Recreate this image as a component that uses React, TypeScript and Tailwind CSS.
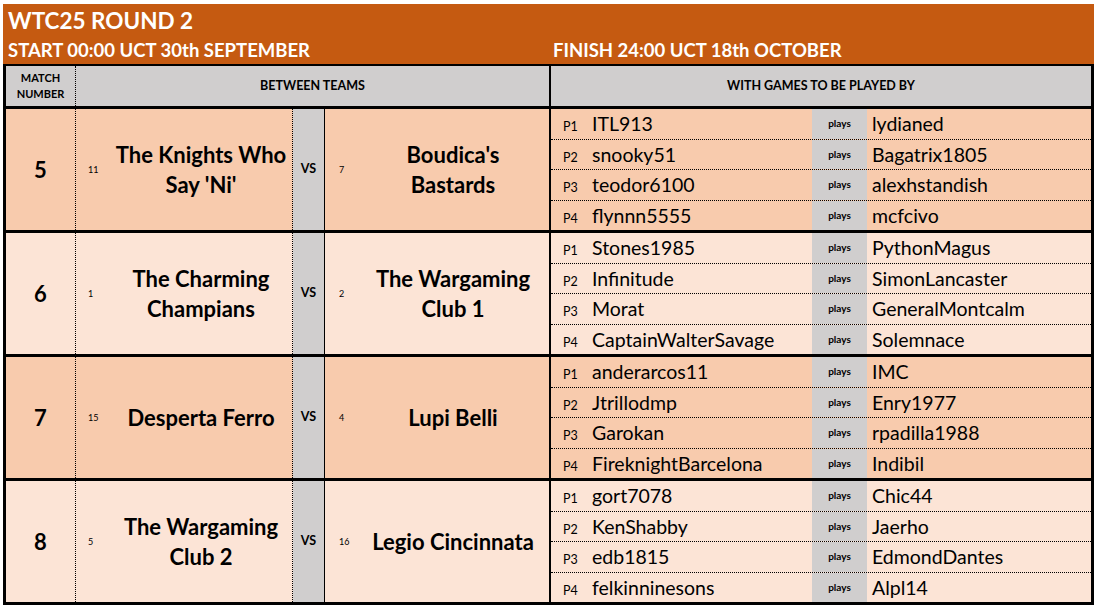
import React from 'react';

type Match = {
  no: number;
  seedA: number;
  teamA: string[];
  seedB: number;
  teamB: string[];
  games: [string, string][];
  dark: boolean;
};

const matches: Match[] = [
  {
    no: 5,
    seedA: 11,
    teamA: ['The Knights Who', "Say 'Ni'"],
    seedB: 7,
    teamB: ["Boudica's", 'Bastards'],
    games: [
      ['ITL913', 'lydianed'],
      ['snooky51', 'Bagatrix1805'],
      ['teodor6100', 'alexhstandish'],
      ['flynnn5555', 'mcfcivo'],
    ],
    dark: true,
  },
  {
    no: 6,
    seedA: 1,
    teamA: ['The Charming', 'Champians'],
    seedB: 2,
    teamB: ['The Wargaming', 'Club 1'],
    games: [
      ['Stones1985', 'PythonMagus'],
      ['Infinitude', 'SimonLancaster'],
      ['Morat', 'GeneralMontcalm'],
      ['CaptainWalterSavage', 'Solemnace'],
    ],
    dark: false,
  },
  {
    no: 7,
    seedA: 15,
    teamA: ['Desperta Ferro'],
    seedB: 4,
    teamB: ['Lupi Belli'],
    games: [
      ['anderarcos11', 'IMC'],
      ['Jtrillodmp', 'Enry1977'],
      ['Garokan', 'rpadilla1988'],
      ['FireknightBarcelona', 'Indibil'],
    ],
    dark: true,
  },
  {
    no: 8,
    seedA: 5,
    teamA: ['The Wargaming', 'Club 2'],
    seedB: 16,
    teamB: ['Legio Cincinnata'],
    games: [
      ['gort7078', 'Chic44'],
      ['KenShabby', 'Jaerho'],
      ['edb1815', 'EdmondDantes'],
      ['felkinninesons', 'Alpl14'],
    ],
    dark: false,
  },
];

const TeamCell: React.FC<{ seed: number; lines: string[]; seedCls: string }> = ({ seed, lines, seedCls }) => (
  <div className="flex-1 flex items-center">
    <span className={`text-[9px] ${seedCls}`}>{seed}</span>
    <div className="flex-1 text-center text-[22px] font-bold leading-[30px] whitespace-nowrap">
      {lines.map((l) => (
        <div key={l}>{l}</div>
      ))}
    </div>
  </div>
);

const App: React.FC = () => {
  return (
    <div className="w-[1098px] h-[609px] bg-white pt-[4px] pl-[3px] text-black" style={{ fontFamily: 'Lato, "Open Sans", sans-serif' }}>
      {/* Title banner */}
      <div className="w-[1091px] h-[60px] bg-[#c55a11] text-white font-bold pl-[5px]">
        <div className="text-[22.5px] leading-[34px]">WTC25 ROUND 2</div>
        <div className="flex text-[18.5px] leading-[24px]">
          <div className="w-[545px]">START 00:00 UCT 30th SEPTEMBER</div>
          <div>FINISH 24:00 UCT 18th OCTOBER</div>
        </div>
      </div>

      {/* Table */}
      <div className="w-[1091px] border-black border-t-2 border-l-[3px] border-r-[3px] border-b-[3px]">
        {/* Header */}
        <div className="flex h-[43px] bg-[#d0cece] border-b-[3px] border-black font-bold text-[12.5px]">
          <div className="w-[70px] border-r border-dotted border-black flex items-center justify-center text-center text-[11px] leading-[16px]">
            MATCH
            <br />
            NUMBER
          </div>
          <div className="w-[473px] flex items-center justify-center">BETWEEN TEAMS</div>
          <div className="flex-1 border-l-2 border-black flex items-center justify-center">WITH GAMES TO BE PLAYED BY</div>
        </div>

        {matches.map((m, i) => (
          <div
            key={m.no}
            className={`flex ${m.dark ? 'bg-[#f8cbad]' : 'bg-[#fce4d6]'} ${i < matches.length - 1 ? 'h-[124px] border-b-[3px] border-black' : 'h-[121px]'}`}
          >
            <div className="w-[70px] border-r border-dotted border-black flex items-center justify-center text-[22px] font-bold">
              {m.no}
            </div>
            <div className="w-[217px] flex border-r border-dotted border-black">
              <TeamCell seed={m.seedA} lines={m.teamA} seedCls="pl-[12px] w-[34px]" />
            </div>
            <div className="w-[32px] bg-[#d0cece] border-r border-black flex items-center justify-center text-[12.5px] font-bold">
              VS
            </div>
            <div className="w-[224px] flex">
              <TeamCell seed={m.seedB} lines={m.teamB} seedCls="pl-[14px] w-[32px]" />
            </div>
            <div className="flex-1 border-l-2 border-black flex flex-col">
              {m.games.map(([a, b], j) => (
                <div
                  key={a}
                  className={`flex-1 flex ${j < m.games.length - 1 ? 'border-b border-dotted border-black' : ''}`}
                >
                  <div className="w-[261px] flex items-center">
                    <div className="flex items-baseline">
                      <span className="w-[41px] pl-[12px] text-[12.5px]">P{j + 1}</span>
                      <span className="text-[19.5px]">{a}</span>
                    </div>
                  </div>
                  <div className="w-[55px] bg-[#d0cece] flex items-center justify-center text-[10px] font-bold">plays</div>
                  <div className="flex-1 flex items-center pl-[5px] text-[19.5px]">{b}</div>
                </div>
              ))}
            </div>
          </div>
        ))}
      </div>
    </div>
  );
};

export default App;
